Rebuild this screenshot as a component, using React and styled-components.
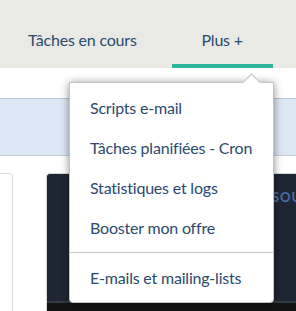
import React from "react";
import styled, { createGlobalStyle } from "styled-components";

const GlobalStyle = createGlobalStyle`
  html, body {
    margin: 0;
    padding: 0;
    background: #ffffff;
    font-family: "Lato", "Noto Sans", sans-serif;
    overflow: hidden;
  }
`;

const menuItems = [
  "Scripts e-mail",
  "Tâches planifiées - Cron",
  "Statistiques et logs",
  "Booster mon offre",
];

export default function App() {
  return (
    <Root>
      <GlobalStyle />
      <Header>
        <Tab>Tâches en cours</Tab>
        <Tab active>Plus +</Tab>
      </Header>
      <Band />
      <Cards>
        <LightCard />
        <DarkCard>
          <DarkTitle>RESSOURCES</DarkTitle>
          <DarkFooter />
        </DarkCard>
      </Cards>
      <Dropdown>
        {menuItems.map((item) => (
          <Item key={item}>{item}</Item>
        ))}
        <Separator />
        <Item>E-mails et mailing-lists</Item>
      </Dropdown>
    </Root>
  );
}

const Root = styled.div`
  position: relative;
  width: 296px;
  height: 311px;
  overflow: hidden;
`;

const Header = styled.div`
  height: 68px;
  background: #e9eae5;
  display: flex;
  align-items: flex-end;
  padding-left: 15px;
  gap: 22px;
`;

const Tab = styled.div`
  box-sizing: border-box;
  height: 40px;
  padding: ${(p) => (p.active ? "0" : "0 13px")};
  width: ${(p) => (p.active ? "101px" : "auto")};
  text-align: center;
  font-size: 16px;
  letter-spacing: -0.2px;
  color: #2b4a6f;
  line-height: 24px;
  border-bottom: 4px solid ${(p) => (p.active ? "#2bb59a" : "transparent")};
`;

const Band = styled.div`
  margin-top: 30px;
  height: 56px;
  background: #dde8f5;
  border-top: 1px solid #b9c6d5;
  border-bottom: 1px solid #c9ced4;
`;

const Cards = styled.div`
  margin-top: 17px;
  display: flex;
  gap: 33px;
  height: 140px;
`;

const LightCard = styled.div`
  flex-shrink: 0;
  width: 13px;
  margin-left: -1px;
  border: 1px solid #dcdcdc;
  border-left: none;
  border-radius: 0 4px 0 0;
`;

const DarkCard = styled.div`
  flex: 1;
  min-width: 0;
  display: flex;
  flex-direction: column;
  background: #1f2633;
  border: 1px solid #d8d8d8;
  border-right: none;
  border-bottom: none;
  border-radius: 4px 0 0 0;
`;

const DarkTitle = styled.div`
  height: 127px;
  box-sizing: border-box;
  padding: 15px 0 0 199px;
  font-size: 13px;
  font-weight: 700;
  letter-spacing: 1px;
  color: #4a6ea6;
  white-space: nowrap;
  overflow: hidden;
`;

const DarkFooter = styled.div`
  flex: 1;
  background: #131313;
  border-top: 2px solid #343c48;
`;

const Dropdown = styled.div`
  position: absolute;
  left: 69px;
  top: 82px;
  width: 205px;
  box-sizing: border-box;
  padding: 5px 0 4px;
  background: #ffffff;
  border: 1px solid #c4c4c4;
  border-radius: 0 0 4px 4px;
  box-shadow: 0 1px 9px rgba(0, 0, 0, 0.45);

  &::before {
    content: "";
    position: absolute;
    top: -7px;
    left: 175px;
    width: 12px;
    height: 12px;
    background: #ffffff;
    border-top: 1px solid #c4c4c4;
    border-left: 1px solid #c4c4c4;
    transform: rotate(45deg);
  }
`;

const Item = styled.div`
  height: 40px;
  box-sizing: border-box;
  padding: 0 0 1px 20px;
  display: flex;
  align-items: center;
  font-size: 16px;
  letter-spacing: -0.2px;
  color: #2b4a6f;
  white-space: nowrap;
`;

const Separator = styled.div`
  height: 1px;
  margin: 4px 0 5px;
  background: #c8c8c8;
`;
